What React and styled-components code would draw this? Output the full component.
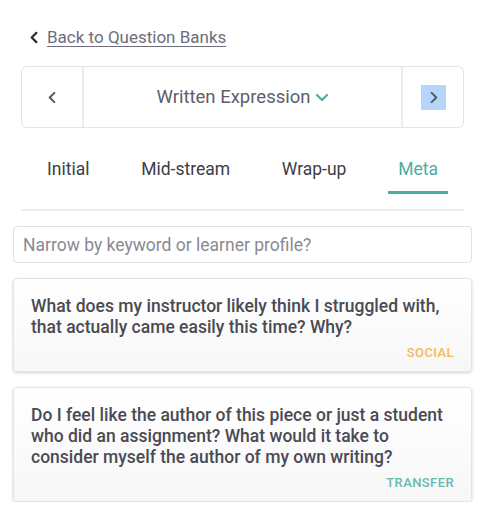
import styled, { createGlobalStyle } from 'styled-components';

const GlobalStyle = createGlobalStyle`
    body {
        margin: 0;
        background: #ffffff;
        font-family: Roboto, "Liberation Sans", sans-serif;
    }
`;

const Page = styled.div`
    width: 489px;
    box-sizing: border-box;
    padding: 0 17px 0 13px;
`;

const BackLink = styled.a`
    display: flex;
    align-items: center;
    gap: 6px;
    height: 20px;
    margin: 27px 0 0 15px;
    color: #6e6e7a;
    font-size: 17px;
    text-decoration: none;
    span {
        text-decoration: underline;
        text-underline-offset: 3px;
        text-decoration-thickness: 1px;
    }
`;

const NavBox = styled.div`
    display: flex;
    height: 62px;
    margin: 19px 8px 0;
    box-sizing: border-box;
    border: 1px solid #e3e3e8;
    border-radius: 6px;
`;

const NavSide = styled.div`
    display: flex;
    align-items: center;
    justify-content: center;
    width: 60px;
    border-left: ${p => p.$right ? '2px solid #ececf0' : 'none'};
    border-right: ${p => p.$right ? 'none' : '2px solid #ececf0'};
`;

const NavButton = styled.div`
    display: flex;
    align-items: center;
    justify-content: center;
    width: 25px;
    height: 25px;
    background: ${p => p.$active ? '#b5d5fb' : 'transparent'};
`;

const NavTitle = styled.div`
    flex: 1;
    display: flex;
    align-items: center;
    justify-content: center;
    gap: 4px;
    color: #5e5e6a;
    font-size: 18.5px;
`;

const Tabs = styled.div`
    display: flex;
    justify-content: space-between;
    margin: 0 8px;
    padding: 28px 16px 0;
    border-bottom: 2px solid #ececef;
`;

const Tab = styled.div`
    padding: 3px 10px 12px;
    font-size: 17.5px;
    color: ${p => p.$active ? '#4aaea1' : '#3d3d47'};
    border-bottom: 3px solid ${p => p.$active ? '#4aaea1' : 'transparent'};
    margin-bottom: 15px;
`;

const Search = styled.input`
    display: block;
    width: 100%;
    height: 37px;
    box-sizing: border-box;
    margin-top: 15px;
    padding: 0 9px;
    border: 1px solid #e0e0e5;
    border-radius: 4px;
    font-family: inherit;
    font-size: 17.5px;
    color: #333;
    outline: none;
    &::placeholder {
        color: #8a8a92;
    }
`;

const Card = styled.div`
    margin-top: 15px;
    padding: 17px 17px 11px 17px;
    border: 1px solid #e4e4e8;
    border-radius: 4px;
    background: linear-gradient(#ffffff, #f7f7f7);
    box-shadow: 0 1px 3px rgba(0, 0, 0, 0.18);
`;

const Question = styled.div`
    font-size: 17.5px;
    font-weight: 500;
    line-height: 21px;
    color: #4a4a54;
`;

const Tag = styled.div`
    margin-top: 7px;
    text-align: right;
    font-size: 13px;
    font-weight: 500;
    letter-spacing: 0.4px;
    color: ${p => p.$color};
`;

const Chevron = ({ dir = 'left', color = '#4a4a52', size = 14, width = 2.2 }) => {
    const d = {
        left: 'M9 2 L4 7 L9 12',
        right: 'M5 2 L10 7 L5 12',
        down: 'M2 5 L7 10 L12 5',
    }[dir];
    return (
        <svg width={size} height={size} viewBox="0 0 14 14" fill="none">
            <path d={d} stroke={color} strokeWidth={width} strokeLinecap="round" strokeLinejoin="round" />
        </svg>
    );
};

const questions = [
    {
        text: 'What does my instructor likely think I struggled with, that actually came easily this time? Why?',
        tag: 'SOCIAL',
        color: '#f4b95c',
    },
    {
        text: 'Do I feel like the author of this piece or just a student who did an assignment? What would it take to consider myself the author of my own writing?',
        tag: 'TRANSFER',
        color: '#68bbad',
    },
];

function App() {
    return (
        <Page>
            <GlobalStyle />
            <BackLink href="#">
                <Chevron dir="left" color="#2e2e36" size={13} width={2.4} />
                <span>Back to Question Banks</span>
            </BackLink>

            <NavBox>
                <NavSide>
                    <NavButton><Chevron dir="left" color="#5a5a64" size={13} /></NavButton>
                </NavSide>
                <NavTitle>
                    Written Expression
                    <Chevron dir="down" color="#4aaea1" size={14} width={2.2} />
                </NavTitle>
                <NavSide $right>
                    <NavButton $active><Chevron dir="right" color="#5a5a64" size={13} /></NavButton>
                </NavSide>
            </NavBox>

            <Tabs>
                <Tab>Initial</Tab>
                <Tab>Mid-stream</Tab>
                <Tab>Wrap-up</Tab>
                <Tab $active>Meta</Tab>
            </Tabs>

            <Search placeholder="Narrow by keyword or learner profile?" />

            {questions.map(q => (
                <Card key={q.tag}>
                    <Question>{q.text}</Question>
                    <Tag $color={q.color}>{q.tag}</Tag>
                </Card>
            ))}
        </Page>
    );
}

export default App;
